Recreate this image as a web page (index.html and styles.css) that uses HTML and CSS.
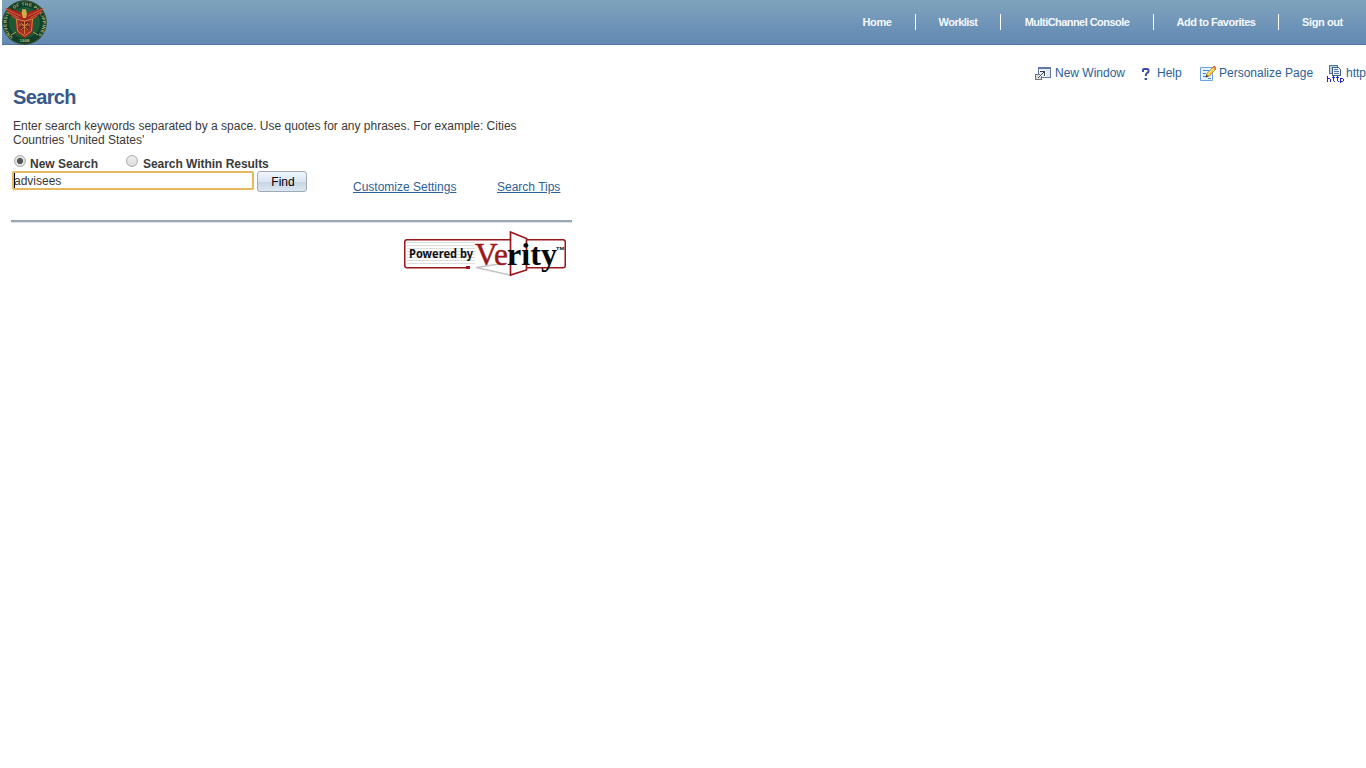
FILE: index.html
```html
<!DOCTYPE html>
<html lang="en">
<head>
<meta charset="utf-8">
<title>Search</title>
<link rel="stylesheet" href="styles.css">
</head>
<body>
<header class="banner">
  <svg class="seal" width="45" height="45" viewBox="0 0 45 45">
    <defs><path id="ring" d="M10.800 37.200 A18 18 0 1 1 34.200 37.200"/></defs>
    <circle cx="22.5" cy="22.5" r="22.2" fill="#123f28"/>
    <circle cx="22.5" cy="22.5" r="21.6" fill="none" stroke="#5b6537" stroke-width=".6"/>
    <circle cx="22.5" cy="22.500" r="15.500" fill="#1d5a34"/>
    <text class="seal-text"><textPath href="#ring" textLength="84">UNIVERSITY OF THE PHILIPPINES</textPath></text>
    <text class="seal-text" x="17.500" y="42.200" textLength="10">1908</text>
    <path d="M3.500 8 L16 11 L20 13 L25 13 L29 11 L41.500 8 L38 14 L32 19 L30 33 L22.500 38 L15 33 L13 19 L7 14Z" fill="#a5251f"/>
    <path d="M4 9 L19 16 M6 12 L17 18 M10 16 L15 19 M41 9 L26 16 M39 12 L28 18 M35 16 L30 19" stroke="#cf7042" stroke-width=".8"/>
    <path d="M19.500 13 L20.500 9 L24 9.500 L25 14 L24 18 L21 18Z" fill="#d3a94c"/>
    <path d="M14.500 19 L22.500 21 L30.500 19 L29.500 31 L22.500 36 L15.500 31Z" fill="#ad2c22" stroke="#c58b42"/>
    <path d="M18 22h9v8h-9z" fill="#78281a"/>
    <path d="M22.500 21v13M17 25h11M19 30l7-7M19 23l7 7" stroke="#ce8744" stroke-width=".9"/>
    <path d="M14 32 L9 35 M31 32 L36 35" stroke="#b09a45"/>
  </svg>
  <nav class="nav">
    <a class="nav-item home">Home</a>
    <a class="nav-item worklist">Worklist</a>
    <a class="nav-item console">MultiChannel Console</a>
    <a class="nav-item favorites">Add to Favorites</a>
    <a class="nav-item signout">Sign out</a>
  </nav>
</header>
<div class="tools">
  <a class="tool new-window">
    <svg width="17" height="16" viewBox="0 0 17 16" shape-rendering="crispEdges">
      <path d="M3.500 1.500h12v10h-12z" fill="#dfe9f3" stroke="#62799d"/>
      <path d="M3 1h13v2H3z" fill="#607ba4"/>
      <path d="M.5 8.500h6v5h-6z" fill="#d9d9d9" stroke="#777"/>
      <path d="M4 4h7v7H9V8L4 12 3 11 7 6H4z" fill="#fff"/>
      <path d="M5 5.500h4.500V10M9 6L3 12" fill="none" stroke="#333c4b"/>
    </svg><span>New Window</span></a>
  <a class="tool help">
    <svg width="10" height="14" viewBox="0 0 10 14"><path d="M2 5V3Q2 2 3 2H6Q7.500 2 7.500 3V4.500Q7.500 5.500 6 6Q4.800 6.800 4.800 9M3.600 12h2.400" fill="none" stroke="#3b4bad" stroke-width="2"/></svg><span>Help</span></a>
  <a class="tool personalize">
    <svg width="17" height="17" viewBox="0 0 17 17">
      <path d="M.5 2.500h12v13H.5z" fill="#e8f3ff" stroke="#6da2df"/>
      <path d="M3 5.500h6M3 8.500h3M3 11.500h3M8 13.500h3" stroke="#4687d4"/>
      <path d="M6 12L7 8.500 13.500 1.500 16 4 9.500 11Z" fill="#f5cf3b" stroke="#a97933" stroke-width=".8"/>
      <path d="M8 9L14 3" stroke="#fff39b"/>
      <path d="M13 2l1.500-1.500L16.500 3 15 4.500z" fill="#df6940"/>
      <path d="M5.500 12.500l1-3 2 2z" fill="#454545"/>
    </svg><span>Personalize Page</span></a>
  <a class="tool http">
    <svg width="18" height="18" viewBox="0 0 18 18" shape-rendering="crispEdges">
      <path d="M2.500.5h8v8h-8z" fill="#b9cfe2" stroke="#58789a"/>
      <path d="M5.500 2.500h6l2 2v6h-8z" fill="#e8f0f8" stroke="#3f6389"/>
      <path d="M7 4.500h4M7 6.500h5M7 8.500h5" stroke="#58789a"/>
      <path d="M.5 11v6M1 13.500h2M3.500 14v3M6.500 11v5M5 12.500h3M7 16.500h1M10.500 11v5M9 12.500h3M11 16.500h1M13.500 13v5M14 13.500h2M16.500 14v2M14 16.500h2" fill="none" stroke="#2424cb"/>
    </svg><span>http</span></a>
</div>
<main class="search">
  <h1 class="title">Search</h1>
  <p class="intro">Enter search keywords separated by a space. Use quotes for any phrases. For example: Cities<br>Countries 'United States'</p>
  <div class="modes">
    <label class="mode"><i class="radio checked"></i><span>New Search</span></label>
    <label class="mode within"><i class="radio"></i><span>Search Within Results</span></label>
  </div>
  <div class="controls">
    <div class="field"><i class="caret"></i>advisees</div>
    <button class="find">Find</button>
    <a class="link customize">Customize Settings</a>
    <a class="link tips">Search Tips</a>
  </div>
  <div class="rule"></div>
  <svg class="verity" width="164" height="47" viewBox="0 0 164 47">
    <path d="M4 11.500h68M4 14.500h68M4 17.500h68M4 20.500h68M4 23.500h68M4 26.500h68M4 29.500h68M4 32.500h68" stroke="#ddd"/>
    <path d="M107 8.750H4Q1.750 8.750 1.750 11V34.500Q1.750 36.750 4 36.750H66" fill="none" stroke="#9c171b" stroke-width="1.500"/>
    <path d="M124 8.750H160Q162.250 8.750 162.250 11V34.500Q162.250 36.750 160 36.750H124" fill="none" stroke="#9c171b" stroke-width="1.500"/>
    <rect x="63" y="35" width="4" height="3" fill="#9c171b"/>
    <path d="M107 44L73 36.500L107 31.500L124 37" fill="none" stroke="#c4c4c4" stroke-width="1.500"/>
    <path d="M107.500 1L123.500 7.500V39L107.500 44Z" fill="#fff" stroke="#9c171b" stroke-width="1.700"/>
    <path d="M72 11h34v22H72z" fill="#fff"/>
    <text class="powered" x="6" y="27" textLength="64" lengthAdjust="spacingAndGlyphs">Powered by</text>
    <text class="brand red" x="72" y="34" textLength="33" lengthAdjust="spacingAndGlyphs">Ve</text>
    <text class="brand" x="104" y="34" textLength="50" lengthAdjust="spacingAndGlyphs">rity</text>
    <text class="tm" x="153" y="19" textLength="8" lengthAdjust="spacingAndGlyphs">TM</text>
  </svg>
</main>
</body>
</html>
```
FILE: styles.css
```css
* { box-sizing: border-box; }
body { margin: 0; background: #fff; color: #3a3a3a; font: 12px/14px "Liberation Sans", Arial, sans-serif; overflow: hidden; }
.banner { height: 45px; margin-left: 2px; display: flex; justify-content: space-between; background: linear-gradient(#7fa4bc, #6f94b8 55%, #648ab4); border-bottom: 1px solid #4f749f; }
.seal { display: block; }
.seal-text { font: bold 4.400px "Liberation Sans", Arial, sans-serif; fill: #b9b779; }
.nav { display: flex; padding-top: 14px; height: 30px; }
.nav-item { height: 16px; line-height: 16px; text-align: center; color: #f5f8fc; font-size: 11px; font-weight: bold; border-right: 1px solid #fff; white-space: nowrap; letter-spacing: -.55px; }
.home { width: 77px; letter-spacing: -.4px; }
.worklist { width: 85px; }
.console { width: 153px; }
.favorites { width: 125px; letter-spacing: -.5px; }
.signout { width: 87px; border: 0; letter-spacing: -.4px; }
.tools { display: flex; height: 40px; padding: 20px 0 0 1035px; color: #2c6095; white-space: nowrap; }
.tool { display: flex; align-items: flex-start; flex: none; line-height: 16px; }
.tool svg { flex: none; }
.new-window { width: 106px; gap: 3px; }
.new-window svg { margin-top: 1px; }
.help { width: 59px; gap: 6px; }
.help svg { margin-top: 2px; }
.personalize { width: 127px; gap: 2px; }
.http { gap: 1px; }
.search { padding: 0 0 0 11px; width: 572px; }
.title { margin: 0 0 0 2px; height: 34px; font-size: 20px; line-height: 24px; letter-spacing: -.65px; color: #36588a; }
.intro { margin: 0 0 0 2px; white-space: nowrap; }
.modes { display: flex; height: 24px; padding: 8px 0 0 3px; font-weight: bold; }
.mode { display: flex; width: 112px; gap: 4px; white-space: nowrap; line-height: 18px; }
.within { gap: 5px; letter-spacing: -.04px; }
.radio { width: 12px; height: 12px; flex: none; border: 1px solid #aaa; border-radius: 50%; background: linear-gradient(#eee, #ddd); }
.checked { background: radial-gradient(circle, #555 0 2.700px, #e2e2e2 3.400px); }
.controls { display: flex; height: 49px; }
.field { width: 242px; height: 19px; margin: 0 3px 0 1px; border: 2px solid #e5b85f; border-radius: 2px; line-height: 16px; display: flex; }
.caret { width: 1px; height: 15px; background: #000; margin-right: -1px; }
.find { width: 50px; height: 21px; padding: 0 0 0 2px; border: 1px solid #a1a9b4; border-radius: 3px; background: linear-gradient(#eef4fb, #dce6f1 50%, #c6d4e3 52%, #dce7f2); color: #000; font: 12px "Liberation Sans", Arial, sans-serif; }
.link { color: #2c6199; text-decoration: underline; padding-top: 9px; white-space: nowrap; }
.customize { margin-left: 46px; width: 144px; }
.rule { width: 561px; height: 3px; border-top: 2px solid #99a6b5; border-bottom: 1px solid #dee2e6; }
.verity { display: block; margin: 8px 0 0 392px; }
.powered { font: bold 11.500px "Noto Sans", sans-serif; fill: #111; }
.brand { font: bold 31px "Liberation Serif", serif; fill: #080808; }
.red { fill: #9c171b; stroke: #9c171b; stroke-width: .5px; font-weight: normal; }
.tm { font: bold 4px "Liberation Sans", sans-serif; }
```
